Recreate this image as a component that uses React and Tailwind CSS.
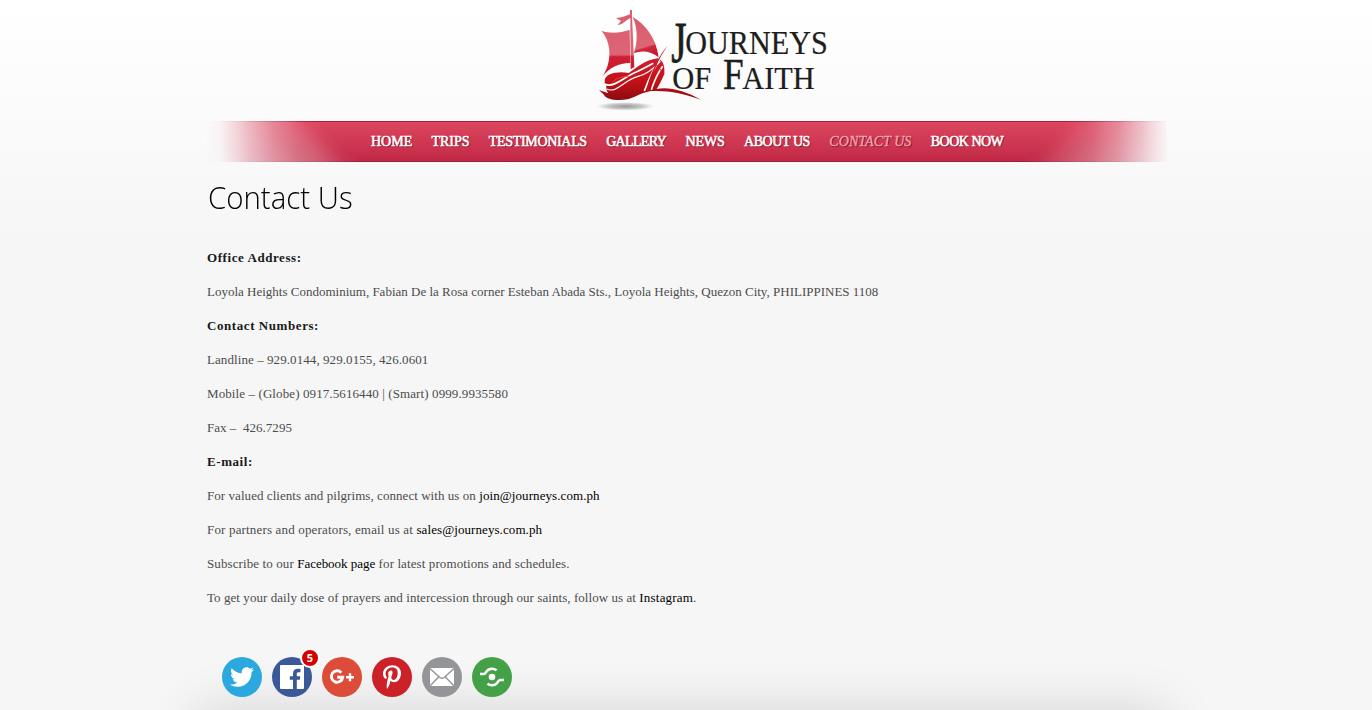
import { FaTwitter, FaPinterestP } from 'react-icons/fa';

const strong = '[-webkit-text-stroke:0.55px_white] ';
const navItems = [
  { label: 'HOME', cls: strong + 'w-[41px]' },
  { label: 'TRIPS', cls: strong + 'w-[38px]' },
  { label: 'TESTIMONIALS', cls: strong + 'w-[98px] tracking-[-0.32px]' },
  { label: 'GALLERY', cls: strong + 'w-[60px] tracking-[-0.68px]' },
  { label: 'NEWS', cls: strong + 'w-[39px] tracking-[-0.15px]' },
  { label: 'ABOUT US', cls: strong + 'w-[66px] tracking-[-0.42px]' },
  { label: 'CONTACT US', cls: 'w-[82px] tracking-[0.05px] italic text-[#f3a5b3] [-webkit-text-stroke:0.3px_#f3a5b3]' },
  { label: 'BOOK NOW', cls: strong + 'w-[73px] tracking-[-0.5px]' },
];

function Logo() {
  return (
    <svg className="h-[120px] w-[250px]" viewBox="0 0 750 360" role="img" aria-label="Journeys of Faith">
      <defs>
        <linearGradient id="sail" gradientUnits="userSpaceOnUse" x1="0" y1="30" x2="0" y2="230">
          <stop offset="0" stopColor="#dc5c6c" />
          <stop offset="0.67" stopColor="#dc6575" />
          <stop offset="0.7" stopColor="#cf2038" />
          <stop offset="1" stopColor="#c91626" />
        </linearGradient>
        <linearGradient id="sailFront" gradientUnits="userSpaceOnUse" x1="160" y1="50" x2="195" y2="165">
          <stop offset="0" stopColor="#dc5c6c" />
          <stop offset="0.73" stopColor="#dc6575" />
          <stop offset="0.77" stopColor="#cf2a40" />
          <stop offset="1" stopColor="#c91626" />
        </linearGradient>
        <linearGradient id="hull" gradientUnits="userSpaceOnUse" x1="0" y1="180" x2="0" y2="300">
          <stop offset="0" stopColor="#cf1d30" />
          <stop offset="0.55" stopColor="#c31116" />
          <stop offset="1" stopColor="#8c0b12" />
        </linearGradient>
        <radialGradient id="shade">
          <stop offset="0" stopColor="#777" stopOpacity="0.75" />
          <stop offset="0.6" stopColor="#888" stopOpacity="0.45" />
          <stop offset="1" stopColor="#aaa" stopOpacity="0" />
        </radialGradient>
      </defs>
      <ellipse cx="106" cy="319" rx="88" ry="13" fill="url(#shade)" />
      <path d="M120 30h6v22l7 149-11 7-1-154C108 61 96 75 83 75l10-12-15-9c17 0 28-6 42-11z" fill="url(#sail)" />
      <path d="M34 92C62 102 92 98 119 90l2 99C90 188 57 203 36 231 62 196 70 134 34 92z" fill="url(#sail)" />
      <path d="M128 50C166 74 198 111 206 172 184 154 158 150 132 159 142 128 145 87 128 50z" fill="url(#sailFront)" />
      <path
        d="M44 245C42 221 82 213 116 219 143 202 162 181 203 175 220 180 225 201 223 222 215 240 209 252 200 267 235 259 285 272 333 299 280 281 238 271 188 273 165 274 144 287 116 297 79 306 44 295 42 284L27 270 55 280C49 271 48 263 49 257 45 253 44 250 44 245z"
        fill="url(#hull)"
      />
      <path d="M45 252C70 267 111 225 139 216 164 205 176 197 190 190" fill="none" stroke="#fff" strokeWidth="5" />
      <path d="M50 267C80 282 104 239 142 230 169 223 188 210 211 184" fill="none" stroke="#fff" strokeWidth="3.5" />
      <path d="M67 247C83 230 101 231 117 228" fill="none" stroke="#e6434d" strokeWidth="3" />
      <path d="M163 273C178 233 193 202 213 172M184 269C197 231 203 219 218 199" fill="none" stroke="#fff" strokeWidth="5" />
      <path d="M232 138C210 163 184 209 169 271l6 1C189 212 207 175 232 138z" fill="#c31521" />
      <path d="M186 184C205 199 214 211 222 225" fill="none" stroke="#c31521" strokeWidth="3" />
      <g fill="#1d1d1d" stroke="#1d1d1d" fontFamily="'Liberation Serif', serif">
        <text x="244" y="187" fontSize="174" strokeWidth="2.500" textLength="46" lengthAdjust="spacingAndGlyphs">J</text>
        <text x="286" y="162" fontSize="98" strokeWidth="0.700" textLength="427" lengthAdjust="spacingAndGlyphs">OURNEYS</text>
        <text x="247" y="268" fontSize="97" strokeWidth="0.700" textLength="117" lengthAdjust="spacingAndGlyphs">OF</text>
        <text x="399" y="268" fontSize="135" strokeWidth="1.500" textLength="62" lengthAdjust="spacingAndGlyphs">F</text>
        <text x="457" y="268" fontSize="97" strokeWidth="0.700" textLength="217" lengthAdjust="spacingAndGlyphs">AITH</text>
      </g>
    </svg>
  );
}

function Nav() {
  return (
    <nav className="relative h-[41px] w-[960px]">
      <div className="absolute inset-0 flex">
        <div className="w-[150px] border-y border-[#a71f3a] bg-linear-to-b from-[#dd465f] to-[#c22846] [mask-composite:intersect] [mask-image:linear-gradient(45deg,rgba(0,0,0,0.2)_0%,rgba(0,0,0,0.42)_20%,rgba(0,0,0,0.57)_40%,rgba(0,0,0,0.78)_62%,rgba(0,0,0,0.95)_73%,#000_80%),linear-gradient(90deg,rgba(0,0,0,0.03)_0%,rgba(0,0,0,0.08)_8%,rgba(0,0,0,0.32)_17%,rgba(0,0,0,0.65)_29%,rgba(0,0,0,0.9)_44%,#000_60%)]" />
        <div className="flex-1 border-y border-[#a71f3a] bg-linear-to-b from-[#dd465f] to-[#c22846]" />
        <div className="w-[150px] border-y border-[#a71f3a] bg-linear-to-b from-[#dd465f] to-[#c22846] [mask-composite:intersect] [mask-image:linear-gradient(-45deg,rgba(0,0,0,0.3)_0%,rgba(0,0,0,0.45)_16%,rgba(0,0,0,0.63)_36%,rgba(0,0,0,0.83)_56%,rgba(0,0,0,0.96)_68%,#000_75%),linear-gradient(270deg,rgba(0,0,0,0.06)_0%,rgba(0,0,0,0.28)_8%,rgba(0,0,0,0.55)_17%,rgba(0,0,0,0.85)_32%,#000_50%)]" />
      </div>
      <ul className="relative flex h-full items-center gap-[19.4px] pl-[164px] text-[14px] text-white">
        {navItems.map((n) => (
          <li key={n.label} className={`whitespace-nowrap [text-shadow:1px_1px_1px_rgba(70,0,15,0.75)] ${n.cls}`}>
            {n.label}
          </li>
        ))}
      </ul>
    </nav>
  );
}

const circle = 'relative flex size-10 items-center justify-center rounded-full text-white';

function Share() {
  return (
    <div className="flex gap-[10px] pl-[15px]">
      <div className={`${circle} bg-[#2ca8e0]`}>
        <FaTwitter className="size-[24px]" />
      </div>
      <div className={`${circle} bg-[#3b5998]`}>
        <svg className="size-6" viewBox="0 0 24 24">
          <rect width="24" height="24" rx="1" fill="currentColor" />
          <path d="M13 24v-9.200H9.800v-3.600H13V8.700c0-3.200 1.900-4.900 4.800-4.900 1.300 0 2.400.1 2.700.2v3.200h-1.900c-1.500 0-1.800.7-1.800 1.800v2.200h3.500l-.5 3.600h-3V24z" fill="#3b5998" />
        </svg>
        <span className="absolute -top-[9px] -right-[8px] flex size-5 items-center justify-center rounded-full border-2 border-white bg-[#d60000] pb-px font-['Open_Sans',sans-serif] text-[11px] leading-none font-bold">
          5
        </span>
      </div>
      <div className={`${circle} bg-[#dd4b39]`}>
        <svg className="h-4 w-[26px]" viewBox="0 0 26 16" fill="none" stroke="currentColor">
          <path d="M12.300 3.700A5.700 5.700 0 1 0 13.700 8.200H8.300" strokeWidth="2.900" />
          <path d="M21 4.200v8M17 8.200h8" strokeWidth="2.400" />
        </svg>
      </div>
      <div className={`${circle} bg-[#cb2128]`}>
        <FaPinterestP className="size-[24px]" />
      </div>
      <div className={`${circle} bg-[#939598]`}>
        <svg className="h-[18px] w-6" viewBox="0 0 24 18">
          <rect width="24" height="18" fill="#fff" />
          <path d="M0 .5l9.600 8.700q2.400 2.200 4.800 0L24 .5M.3 17.700l8.500-9M23.700 17.700l-8.500-9" fill="none" stroke="#939598" strokeWidth="1.400" />
        </svg>
      </div>
      <div className={`${circle} bg-[#45a147]`}>
        <svg className="h-5 w-6" viewBox="0 0 24 20" fill="none" stroke="currentColor" strokeWidth="2.600">
          <circle cx="12" cy="10" r="3.300" fill="currentColor" stroke="none" />
          <path d="M0 7h3.500c1.600 0 2-.8 2.700-2C7.400 2.800 9.300 1.700 12 1.700c1.800 0 3.200.5 4.500 1.700" />
          <path d="M24 13h-3.500c-1.600 0-2 .8-2.700 2-1.200 2.200-3.100 3.300-5.800 3.300-1.800 0-3.200-.5-4.500-1.700" />
        </svg>
      </div>
    </div>
  );
}

export default function App() {
  const bold = 'font-bold text-[#1a1a1a] tracking-[0.57px]';
  const link = 'text-black tracking-[0.08px]';
  return (
    <div className="relative flex h-[710px] w-full justify-center overflow-hidden bg-linear-to-b from-white to-[#f6f6f6] to-[245px] font-['Liberation_Serif',serif]">
      <div className="absolute top-full left-[197px] h-[100px] w-[970px] shadow-[0_0_52px_rgba(0,0,0,0.14)]" />
      <div className="relative flex w-[960px] translate-x-px flex-col">
        <header className="flex h-[121px] pl-[383px]">
          <Logo />
        </header>
        <Nav />
        <h1 className="mt-[13px] h-[44px] origin-left scale-x-[0.92] pl-px font-['Open_Sans',sans-serif] text-[32px] leading-[44px] font-light text-black">
          Contact Us
        </h1>
        <main className="mt-[22px] flex flex-col text-[13px] leading-[34px] whitespace-pre text-[#4c4c4c]">
          <p className={bold}>Office Address:</p>
          <p>Loyola Heights Condominium, Fabian De la Rosa corner Esteban Abada Sts., Loyola Heights, Quezon City, PHILIPPINES 1108</p>
          <p className={bold}>Contact Numbers:</p>
          <p className="tracking-[0.075px]">Landline – 929.0144, 929.0155, 426.0601</p>
          <p className="tracking-[0.1px]">Mobile – (Globe) 0917.5616440 | (Smart) 0999.9935580</p>
          <p className="tracking-[0.03px]">Fax –  426.7295</p>
          <p className={bold}>E-mail:</p>
          <p className="tracking-[0.055px]">
            For valued clients and pilgrims, connect with us on <a className={link}>join@journeys.com.ph</a>
          </p>
          <p className="tracking-[0.165px]">
            For partners and operators, email us at <a className={link}>sales@journeys.com.ph</a>
          </p>
          <p className="tracking-[0.1px]">
            Subscribe to our <a className="text-black tracking-[-0.02px]">Facebook page</a> for latest promotions and schedules.
          </p>
          <p className="tracking-[0.06px]">
            To get your daily dose of prayers and intercession through our saints, follow us at <a className="text-black tracking-[0.2px]">Instagram</a>.
          </p>
        </main>
        <div className="mt-[42px]">
          <Share />
        </div>
      </div>
    </div>
  );
}
